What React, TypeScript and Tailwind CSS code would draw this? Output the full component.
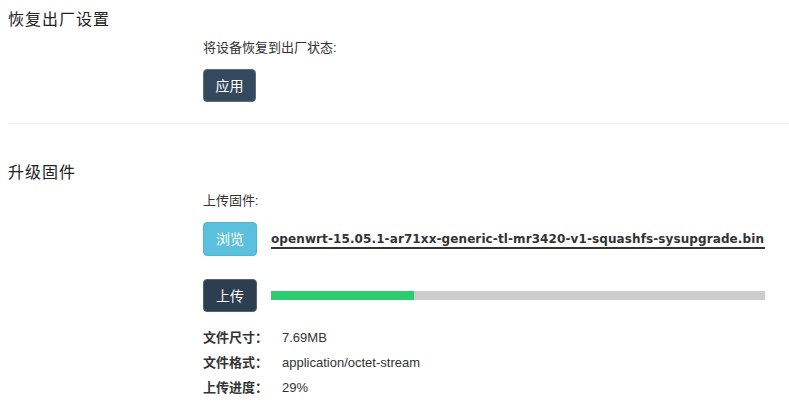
import React from "react";

const cjk = { fontFamily: '"Liberation Sans", "Noto Sans CJK SC", sans-serif' };

export default function App() {
  return (
    <div className="bg-white w-[789px] h-[411px] pl-2 text-[#333]" style={cjk}>
      <h3 className="pt-[10px] text-[16px] leading-[20px] tracking-[1px] text-[#222] font-normal">恢复出厂设置</h3>
      <div className="ml-[195px]">
        <div className="mt-[9px] text-[13px] leading-[18px]">将设备恢复到出厂状态:</div>
        <button className="mt-[12px] w-[53px] h-[33px] rounded-[4px] bg-[#34495e] border border-[#5d6d7e] text-white text-[14px] leading-none flex items-center justify-center">
          应用
        </button>
      </div>
      <div className="mt-[21px] h-px bg-[#eeeeee]" />
      <h3 className="mt-[39px] text-[16px] leading-[20px] tracking-[1px] text-[#222] font-normal">升级固件</h3>
      <div className="ml-[195px]">
        <div className="mt-[9px] text-[13px] leading-[18px]">上传固件:</div>
        <div className="mt-[12px] flex items-center">
          <button className="w-[54px] h-[34px] rounded-[4px] bg-[#5bc0de] border border-[#46b8da] text-white text-[14px] leading-none flex items-center justify-center">
            浏览
          </button>
          <div
            className="ml-[14px] w-[494px] border-b-2 border-[#333] text-[12px] font-bold leading-[16px] pt-[2px] tracking-[0.1px] text-[#333] whitespace-nowrap"
            style={{ fontFamily: '"DejaVu Sans", sans-serif' }}
          >
            openwrt-15.05.1-ar71xx-generic-tl-mr3420-v1-squashfs-sysupgrade.bin
          </div>
        </div>
        <div className="mt-[23px] flex items-center">
          <button className="w-[54px] h-[33px] rounded-[4px] bg-[#2c3e50] border border-[#566573] text-white text-[14px] leading-none flex items-center justify-center">
            上传
          </button>
          <div className="ml-[14px] w-[494px] h-[9px] bg-[#cccccc] flex">
            <div className="h-full bg-[#2ecc71]" style={{ width: "29%" }} />
          </div>
        </div>
        <div className="mt-[13px] text-[13px] leading-[25px]">
          <div className="flex">
            <span className="w-[79px] font-bold">文件尺寸：</span>
            <span>7.69MB</span>
          </div>
          <div className="flex">
            <span className="w-[79px] font-bold">文件格式：</span>
            <span>application/octet-stream</span>
          </div>
          <div className="flex">
            <span className="w-[79px] font-bold">上传进度：</span>
            <span>29%</span>
          </div>
        </div>
      </div>
    </div>
  );
}
